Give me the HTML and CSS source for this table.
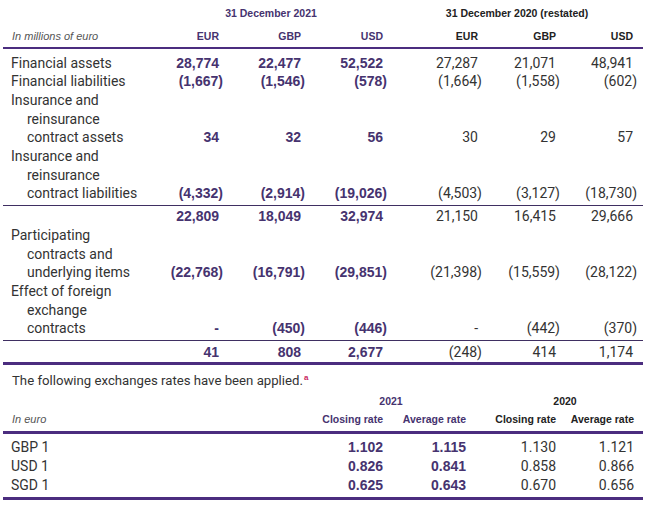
FILE: index.html
```html
<!DOCTYPE html>
<html lang="en">
<head>
<meta charset="utf-8">
<title>Currency exposure</title>
<link rel="stylesheet" href="styles.css">
</head>
<body>
<div class="page">
  <table class="fx">
    <colgroup>
      <col class="w-label"><col class="w-c1"><col class="w-c2"><col class="w-c3"><col class="w-c4"><col class="w-c5"><col class="w-c6">
    </colgroup>
    <thead>
      <tr class="period">
        <th></th>
        <th colspan="3" class="cur y21">31 December 2021</th>
        <th colspan="3" class="y20">31 December 2020 (restated)</th>
      </tr>
      <tr class="ccy">
        <th class="unit">In millions of euro</th>
        <th class="cur">EUR</th><th class="cur">GBP</th><th class="cur">USD</th>
        <th>EUR</th><th>GBP</th><th>USD</th>
      </tr>
    </thead>
    <tbody>
      <tr class="first">
        <td class="label">Financial assets</td>
        <td class="b">28,774</td><td class="b">22,477</td><td class="b">52,522</td>
        <td>27,287</td><td>21,071</td><td>48,941</td>
      </tr>
      <tr>
        <td class="label">Financial liabilities</td>
        <td class="b"><span class="neg">(1,667)</span></td><td class="b"><span class="neg">(1,546)</span></td><td class="b"><span class="neg">(578)</span></td>
        <td><span class="neg">(1,664)</span></td><td><span class="neg">(1,558)</span></td><td><span class="neg">(602)</span></td>
      </tr>
      <tr>
        <td class="label">Insurance and reinsurance contract assets</td>
        <td class="b">34</td><td class="b">32</td><td class="b">56</td>
        <td>30</td><td>29</td><td>57</td>
      </tr>
      <tr class="pre-rule">
        <td class="label">Insurance and reinsurance contract liabilities</td>
        <td class="b"><span class="neg">(4,332)</span></td><td class="b"><span class="neg">(2,914)</span></td><td class="b"><span class="neg">(19,026)</span></td>
        <td><span class="neg">(4,503)</span></td><td><span class="neg">(3,127)</span></td><td><span class="neg">(18,730)</span></td>
      </tr>
      <tr class="sub">
        <td class="label"></td>
        <td class="b">22,809</td><td class="b">18,049</td><td class="b">32,974</td>
        <td>21,150</td><td>16,415</td><td>29,666</td>
      </tr>
      <tr>
        <td class="label">Participating contracts and underlying items</td>
        <td class="b"><span class="neg">(22,768)</span></td><td class="b"><span class="neg">(16,791)</span></td><td class="b"><span class="neg">(29,851)</span></td>
        <td><span class="neg">(21,398)</span></td><td><span class="neg">(15,559)</span></td><td><span class="neg">(28,122)</span></td>
      </tr>
      <tr class="pre-rule">
        <td class="label">Effect of foreign exchange contracts</td>
        <td class="b">-</td><td class="b"><span class="neg">(450)</span></td><td class="b"><span class="neg">(446)</span></td>
        <td>-</td><td><span class="neg">(442)</span></td><td><span class="neg">(370)</span></td>
      </tr>
      <tr class="total">
        <td class="label"></td>
        <td class="b">41</td><td class="b">808</td><td class="b">2,677</td>
        <td><span class="neg">(248)</span></td><td>414</td><td>1,174</td>
      </tr>
    </tbody>
  </table>

  <p class="note">The following exchanges rates have been applied.<sup class="fn">a</sup></p>

  <table class="rates">
    <colgroup>
      <col class="r-label"><col class="r-c1"><col class="r-c2"><col class="r-c3"><col class="r-c4">
    </colgroup>
    <thead>
      <tr class="year">
        <th></th>
        <th colspan="2" class="cur y21">2021</th>
        <th colspan="2" class="y20">2020</th>
      </tr>
      <tr class="kind">
        <th class="unit">In euro</th>
        <th class="cur">Closing rate</th><th class="cur">Average rate</th>
        <th>Closing rate</th><th>Average rate</th>
      </tr>
    </thead>
    <tbody>
      <tr class="first">
        <td class="label">GBP 1</td>
        <td class="b">1.102</td><td class="b">1.115</td><td>1.130</td><td>1.121</td>
      </tr>
      <tr>
        <td class="label">USD 1</td>
        <td class="b">0.826</td><td class="b">0.841</td><td>0.858</td><td>0.866</td>
      </tr>
      <tr class="last">
        <td class="label">SGD 1</td>
        <td class="b">0.625</td><td class="b">0.643</td><td>0.670</td><td>0.656</td>
      </tr>
    </tbody>
  </table>
</div>
</body>
</html>
```

FILE: styles.css
```css
body {
  margin: 0;
  background: #ffffff;
  font-family: Roboto, "Liberation Sans", Arial, sans-serif;
  color: #333333;
}

.page {
  width: 646px;
  padding: 0 3px;
  box-sizing: border-box;
}

table {
  border-collapse: collapse;
  table-layout: fixed;
  width: 640px;
}

/* column widths: main table */
.w-label { width: 145px; }
.w-c1 { width: 71px; }
.w-c2 { width: 82px; }
.w-c3 { width: 82px; }
.w-c4 { width: 95px; }
.w-c5 { width: 78px; }
.w-c6 { width: 87px; }

/* column widths: rates table */
.r-label { width: 297px; }
.r-c1 { width: 83px; }
.r-c2 { width: 83px; }
.r-c3 { width: 90px; }
.r-c4 { width: 87px; }

th {
  padding: 0;
  font-family: "Liberation Sans", Arial, sans-serif;
  font-size: 10.5px;
  line-height: 14px;
  font-weight: 700;
  text-align: right;
  color: #222222;
}

th.cur { color: #46336f; }

th.unit {
  text-align: left;
  padding-left: 9px;
  font-size: 11px;
  font-weight: 400;
  font-style: italic;
  color: #555555;
}

th:last-child,
td:last-child {
  padding-right: 10px;
}

.rates th:last-child,
.rates td:last-child {
  padding-right: 9px;
}

td {
  padding: 0;
  font-size: 14px;
  line-height: 18.7px;
  text-align: right;
  vertical-align: bottom;
  color: #333333;
}

td.label {
  text-align: left;
  padding-left: 24px;
  text-indent: -16px;
  color: #333333;
}

td.b {
  font-family: "Liberation Sans", Arial, sans-serif;
  font-weight: 700;
  color: #46336f;
}

.neg {
  display: inline-block;
  margin-right: -4px;
  text-indent: 0;
}

/* main table rows */
.period th {
  padding-top: 6px;
  padding-bottom: 4px;
  text-align: center;
}

.period th.y21 { padding-left: 11px; }
.period th.y20 { padding-left: 18px; }

.ccy th {
  padding-top: 5px;
  padding-bottom: 4px;
  border-bottom: 2px solid #4b2d7f;
}

.fx tr.first td { padding-top: 4.5px; }

.fx tr.pre-rule td {
  padding-bottom: 2px;
  border-bottom: 1px solid #3f2f62;
}

.fx tr.sub td {
  padding-top: 1px;
  padding-bottom: 0;
}

.fx tr.total td {
  padding-top: 1.5px;
  padding-bottom: 1px;
  border-bottom: 3px solid #4b2d7f;
}

.note {
  margin: 7px 0 0 9px;
  font-size: 13.2px;
  line-height: 18.6px;
  color: #333333;
}

.fn {
  font-family: "Liberation Sans", Arial, sans-serif;
  font-size: 8px;
  font-weight: 700;
  line-height: 0;
  vertical-align: 5px;
  color: #c8275f;
  margin-left: 1px;
}

/* rates table */
.year th {
  padding-top: 3px;
  padding-bottom: 4px;
  text-align: center;
}

.year th.y21 { padding-left: 16px; }
.year th.y20 { padding-left: 30px; }

.kind th {
  padding-top: 0;
  padding-bottom: 5px;
  border-bottom: 3px solid #4b2d7f;
}

.rates tr.first td { padding-top: 4.5px; }

.rates tr.last td {
  padding-bottom: 2.5px;
  border-bottom: 3px solid #4b2d7f;
}
```
